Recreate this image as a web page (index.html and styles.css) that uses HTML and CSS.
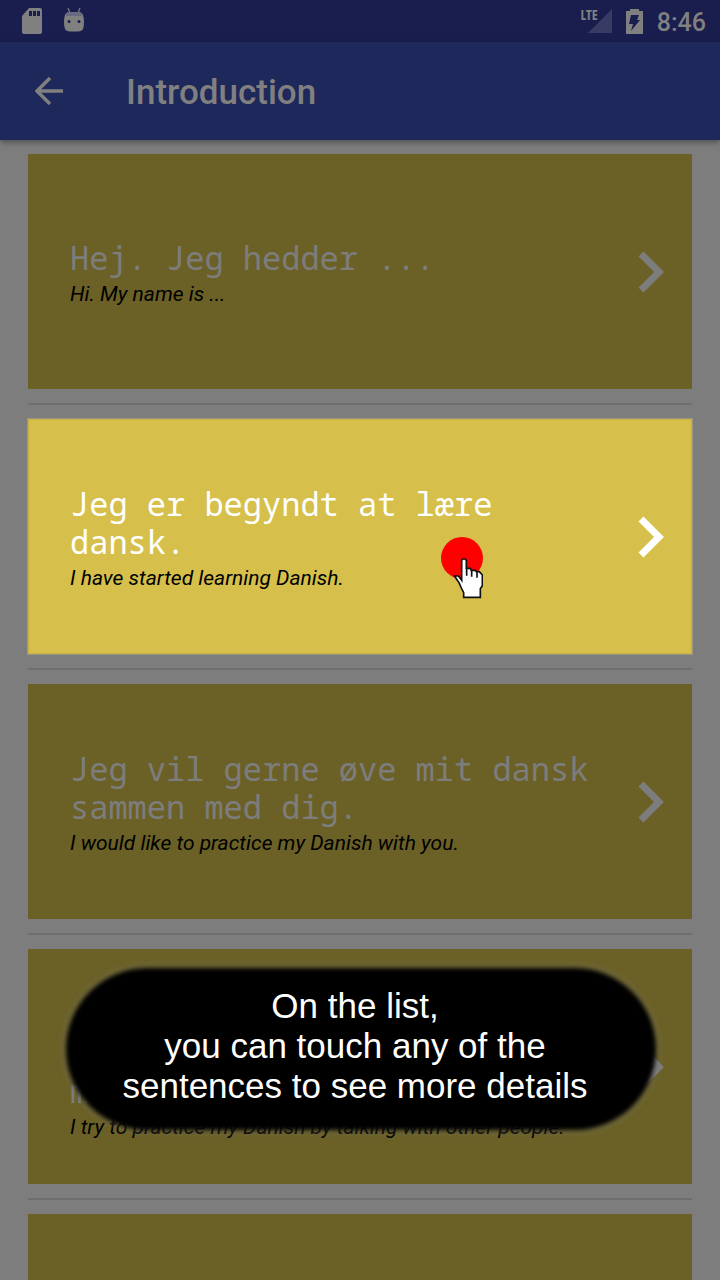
FILE: index.html
```html
<!DOCTYPE html>
<html lang="en">
<head>
<meta charset="utf-8">
<meta name="viewport" content="width=device-width, initial-scale=1">
<title>Introduction</title>
<link rel="stylesheet" href="styles.css">
</head>
<body>
<div class="screen">
  <div class="status">
    <div class="status-left">
      <svg width="20" height="26" viewBox="0 0 20 26" aria-hidden="true"><path fill="#808080" d="M7 0h11q2 0 2 2v22q0 2-2 2H2q-2 0-2-2V8z"/><path fill="#191e4e" d="M7 3h3v5H7zM11 3h3v5h-3zM15 3h3v5h-3z"/></svg>
      <svg width="20" height="26" viewBox="0 0 20 26" aria-hidden="true"><path d="M4 0l2 5M16 0l-2 5" stroke="#808080" stroke-width="1.2" fill="none"/><path fill="#808080" d="M1 7Q2 4 6 4h8q4 0 5 3 2 7 0 14-1 2-5 2.500H6Q2 23 1 21-1 14 1 7z"/><path fill="#686a80" d="M2 6q1-2 4-2h8q3 0 4 2v2H2z"/><circle cx="5" cy="13.500" r="1.500" fill="#191e4e"/><circle cx="15" cy="13.500" r="1.500" fill="#191e4e"/></svg>
    </div>
    <div class="status-right">
      <div class="signal">
        <span class="lte">LTE</span>
        <svg width="24" height="24" viewBox="0 0 24 24" aria-hidden="true"><path fill="#383c64" d="M24 0v24H0z"/></svg>
      </div>
      <svg width="17" height="25" viewBox="0 0 17 25" aria-hidden="true"><path fill="#808080" d="M4 0h9v2h4v23H0V2h4z"/><path fill="#191e4e" d="M5 6h8l-2 5h3L5 22l2-7H3z"/></svg>
      <span class="clock">8:46</span>
    </div>
  </div>
  <header class="appbar">
    <button class="back" type="button" aria-label="Back">
      <svg width="28" height="28" viewBox="0 0 28 28" aria-hidden="true"><path d="M28 14H2M15 1L2 14l13 13" fill="none" stroke="#808080" stroke-width="3.400"/></svg>
    </button>
    <h1 class="heading">Introduction</h1>
  </header>
  <main class="list">
    <a class="card" href="#s1">
      <span class="text"><span class="danish">Hej. Jeg hedder ...</span><span class="english">Hi. My name is ...</span></span>
      <svg class="chevron" viewBox="0 0 26 42" aria-hidden="true"><path d="M3 3l18 18L3 39"/></svg>
    </a>
    <hr class="rule">
    <a class="card active" href="#s2">
      <span class="text"><span class="danish">Jeg er begyndt at lære dansk.</span><span class="english">I have started learning Danish.</span></span>
      <svg class="chevron" viewBox="0 0 26 42" aria-hidden="true"><path d="M3 3l18 18L3 39"/></svg>
      <svg class="touch" width="42" height="62" viewBox="63 51 126 186" aria-hidden="true">
        <circle cx="126" cy="114" r="63" fill="#f00"/>
        <path d="M104 168h11l6 7 4 6v-60l4-4h6l4 4v24h12l3 6h12l3 4h9l9 10v32l-6 9v26h-50v-14l-7-14-6-14-5-8-5-7z" fill="#fff" stroke="#111" stroke-width="5"/>
        <path d="M140 144v23M155 150v20M171 154v19" stroke="#111" stroke-width="5" fill="none"/>
      </svg>
    </a>
    <hr class="rule">
    <a class="card" href="#s3">
      <span class="text"><span class="danish">Jeg vil gerne øve mit dansk sammen med dig.</span><span class="english">I would like to practice my Danish with you.</span></span>
      <svg class="chevron" viewBox="0 0 26 42" aria-hidden="true"><path d="M3 3l18 18L3 39"/></svg>
    </a>
    <hr class="rule">
    <a class="card" href="#s4">
      <span class="text"><span class="danish">Jeg prøver at øve mit dansk ved at tale med andre mennesker.</span><span class="english">I try to practice my Danish by talking with other people.</span></span>
      <svg class="chevron" viewBox="0 0 26 42" aria-hidden="true"><path d="M3 3l18 18L3 39"/></svg>
    </a>
    <hr class="rule">
    <a class="card" href="#s5" aria-label="Next sentence"></a>
  </main>
  <p class="hint">On the list,<br>you can touch any of the<br>sentences to see more details</p>
</div>
</body>
</html>
```
FILE: styles.css
```css
* { box-sizing: border-box; }
body { margin: 0; font-family: Roboto, sans-serif; background: #7d7d7d; }
.screen {
  position: relative;
  display: flex;
  flex-direction: column;
  height: 100vh;
  overflow: hidden;
}
.status {
  display: flex;
  flex: none;
  justify-content: space-between;
  align-items: center;
  height: 42px;
  padding: 0 14px 0 22px;
  background: #191e4e;
  color: #808080;
}
.status-left { display: flex; gap: 22px; }
.status-right { display: flex; align-items: center; gap: 14px; }
.status-left svg, .status-right svg { display: block; }
.signal { display: flex; align-items: flex-end; position: relative; }
.lte {
  position: absolute;
  right: 14px;
  top: -1px;
  font: 700 14px/14px "Open Sans Condensed", "Roboto Condensed", Roboto, sans-serif;
}
.clock { padding-top: 3px; font-size: 25px; font-weight: 500; line-height: 30px; }
.appbar {
  position: relative;
  z-index: 1;
  display: flex;
  flex: none;
  align-items: center;
  gap: 63px;
  height: 98px;
  padding: 0 35px;
  background: #1f285a;
  color: #808080;
  box-shadow: 0 2px 6px rgba(0, 0, 0, 0.4);
}
.back { padding: 0; border: 0; background: none; }
.back svg { display: block; }
.heading { margin: 0; padding-top: 4px; font-size: 35px; font-weight: 500; line-height: 42px; }
.list { flex: 1; min-height: 0; padding: 14px 28px; overflow: hidden; }
.card {
  position: relative;
  display: flex;
  align-items: center;
  justify-content: space-between;
  min-height: 235px;
  padding: 0 28px 0 42px;
  background: #6b6127;
  color: #7d7d7d;
  text-decoration: none;
}
.active {
  background: #d6c04b;
  color: #fff;
  box-shadow: 0 0 0 1px #9c9780, inset 0 0 0 1px #c4af43;
}
.text { flex: 1; padding: 2px 28px 0 0; }
.danish {
  display: block;
  font-family: "Droid Sans Mono", "Noto Sans Mono", "DejaVu Sans Mono", monospace;
  font-size: 32px;
  line-height: 38px;
}
.english {
  display: block;
  margin-top: 4px;
  color: #000;
  font-size: 21px;
  font-style: italic;
  line-height: 26px;
}
.chevron { flex: none; width: 26px; height: 42px; }
.chevron path { fill: none; stroke: currentColor; stroke-width: 7; }
.touch { position: absolute; left: 413px; top: 118px; }
.rule { height: 2px; margin: 14px 0; border: 0; background: #6e6e6e; }
.hint {
  position: absolute;
  z-index: 2;
  left: 66px;
  right: 64px;
  bottom: 150px;
  margin: 0;
  padding: 18px 24px 24px 12px;
  color: #fff;
  font-family: "Liberation Sans", Arial, sans-serif;
  font-size: 35px;
  line-height: 40px;
  text-align: center;
}
.hint::before {
  content: "";
  position: absolute;
  z-index: -1;
  inset: 0;
  border-radius: 82px;
  background: #000;
  box-shadow: 0 0 6px 2px rgba(125, 125, 125, 0.4);
  filter: blur(2px);
}
```
